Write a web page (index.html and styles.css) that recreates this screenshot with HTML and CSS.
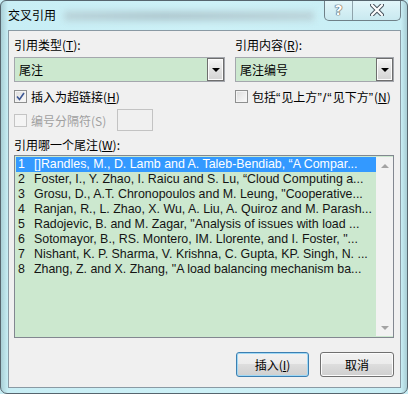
FILE: index.html
```html
<!DOCTYPE html>
<html lang="zh-CN">
<head>
  <meta charset="UTF-8">
  <title>交叉引用</title>
  <link rel="stylesheet" href="styles.css">
</head>
<body>
  <div class="window">
    <div class="titlebar">
      <span class="title">交叉引用</span>
      <span class="glass-blur"></span>
      <div class="caption-buttons">
        <span class="cap-btn help">?</span>
        <span class="cap-btn close">
          <svg width="14" height="12" viewBox="0 0 14 12">
            <path d="M2 1 L12 11 M12 1 L2 11" stroke="#4a5660" stroke-width="4.2" stroke-linecap="round"/>
            <path d="M2 1 L12 11 M12 1 L2 11" stroke="#ffffff" stroke-width="2.2" stroke-linecap="round"/>
          </svg>
        </span>
      </div>
    </div>

    <div class="client">
      <div class="top-row">
        <div class="col col-left">
          <div class="label">引用类型(<u>T</u>):</div>
          <div class="combo">
            <span class="combo-text">尾注</span>
            <span class="combo-btn"><i class="arrow-down"></i></span>
          </div>
          <div class="check-row">
            <span class="checkbox">
              <svg width="9" height="9" viewBox="0 0 9 9"><path d="M1 4.5 L3.5 7.5 L8 1" fill="none" stroke="#3b5694" stroke-width="1.6"/></svg>
            </span>
            <span>插入为超链接(<u>H</u>)</span>
          </div>
        </div>
        <div class="col col-right">
          <div class="label">引用内容(<u>R</u>):</div>
          <div class="combo">
            <span class="combo-text">尾注编号</span>
            <span class="combo-btn"><i class="arrow-down"></i></span>
          </div>
          <div class="check-row">
            <span class="checkbox"></span>
            <span>包括<span class="q">“</span>见上方<span class="q">”/“</span>见下方<span class="q">”</span>(<u>N</u>)</span>
          </div>
        </div>
      </div>

      <div class="sep-row">
        <span class="checkbox disabled"></span>
        <span class="sep-label">编号分隔符(S)</span>
        <span class="sep-input"></span>
      </div>

      <div class="label list-label">引用哪一个尾注(<u>W</u>):</div>
      <div class="listbox">
        <div class="items">
          <div class="item selected"><span class="num">1</span><span class="txt">[]Randles, M., D. Lamb and A. Taleb-Bendiab, “A Compar...</span></div>
          <div class="item"><span class="num">2</span><span class="txt">Foster, I., Y. Zhao, I. Raicu and S. Lu, “Cloud Computing a...</span></div>
          <div class="item"><span class="num">3</span><span class="txt">Grosu, D., A.T. Chronopoulos and M. Leung, "Cooperative...</span></div>
          <div class="item"><span class="num">4</span><span class="txt">Ranjan, R., L. Zhao, X. Wu, A. Liu, A. Quiroz and M. Parash...</span></div>
          <div class="item"><span class="num">5</span><span class="txt">Radojevic, B. and M. Zagar, "Analysis of issues with load ...</span></div>
          <div class="item"><span class="num">6</span><span class="txt">Sotomayor, B., RS. Montero, IM. Llorente, and I. Foster, "...</span></div>
          <div class="item"><span class="num">7</span><span class="txt">Nishant, K. P. Sharma, V. Krishna, C. Gupta, KP. Singh, N. ...</span></div>
          <div class="item"><span class="num">8</span><span class="txt">Zhang, Z. and X. Zhang, "A load balancing mechanism ba...</span></div>
        </div>
        <div class="scrollbar">
          <span class="sb-btn"><i class="arrow-up"></i></span>
          <span class="sb-btn"><i class="arrow-small-down"></i></span>
        </div>
      </div>

      <div class="buttons">
        <button class="btn default">插入(<u>I</u>)</button>
        <button class="btn">取消</button>
      </div>
    </div>
  </div>
</body>
</html>
```

FILE: styles.css
```css
body {
  margin: 0;
  font-family: "Noto Sans CJK SC", sans-serif;
  font-size: 12px;
  color: #000;
  background: #c9eef5;
}

.window {
  width: 408px;
  height: 394px;
  box-sizing: border-box;
  border: 1px solid #56656e;
  border-radius: 6px 6px 7px 7px;
  background: linear-gradient(90deg, #a9cfd6 0, #c8eef5 7px, #cdf1f7 50%, #c8eef5 400px, #9fc3ca 408px);
  overflow: hidden;
}

.titlebar {
  height: 29px;
  display: flex;
  align-items: flex-start;
  position: relative;
}

.title {
  margin: 6px 0 0 7px;
  line-height: 16px;
  color: #000;
}

.glass-blur {
  width: 250px;
  height: 10px;
  margin: 10px 0 0 8px;
  background: linear-gradient(90deg, #b6cdd3, #a9c0c7 40%, #b8ced4);
  filter: blur(3px);
  opacity: 0.8;
}

.caption-buttons {
  position: absolute;
  top: -1px;
  right: 6px;
  display: flex;
  height: 20px;
  border: 1px solid #6f8088;
  border-top: none;
  border-radius: 0 0 5px 5px;
  background: linear-gradient(#e3f6fa, #c9e9f0);
  overflow: hidden;
}

.cap-btn {
  display: flex;
  align-items: center;
  justify-content: center;
  height: 20px;
}

.help {
  width: 27px;
  border-right: 1px solid #8fa3ab;
  font-family: "DejaVu Sans", sans-serif;
  font-weight: bold;
  font-size: 14px;
  color: #fff;
  text-shadow: 0 0 1px #3f4a52, 0 0 1px #3f4a52, 0 0 1px #3f4a52;
}

.close {
  width: 47px;
}

.client {
  width: 393px;
  height: 358px;
  margin-left: 7px;
  box-sizing: border-box;
  border: 1px solid #8a9aa4;
  background: #f0f0f0;
  padding: 6px 6px 0 5px;
}

.top-row {
  display: flex;
  gap: 10px;
}

.col-left {
  width: 211px;
}

.col-right {
  width: 159px;
}

.label {
  height: 16px;
  line-height: 16px;
  white-space: nowrap;
}

.combo {
  margin-top: 4px;
  height: 25px;
  box-sizing: border-box;
  border: 1px solid #a4a7ad;
  background: #cce8cf;
  display: flex;
  align-items: center;
  justify-content: space-between;
}

.combo-text {
  padding-left: 4px;
}

.combo-btn {
  width: 17px;
  height: 23px;
  box-sizing: border-box;
  border: 1px solid #6e6e6e;
  background: linear-gradient(#f6f6f6, #e2e2e2 50%, #d4d4d4);
  box-shadow: inset 0 0 0 1px #fbfbfb;
  display: flex;
  align-items: center;
  justify-content: center;
}

.arrow-down {
  width: 0;
  height: 0;
  border-left: 4px solid transparent;
  border-right: 4px solid transparent;
  border-top: 4px solid #000;
}

.check-row {
  margin-top: 6px;
  height: 16px;
  display: flex;
  align-items: center;
  gap: 4px;
  white-space: nowrap;
}

.q {
  font-family: "Liberation Sans", sans-serif;
  font-size: 13px;
  letter-spacing: 1px;
}

.checkbox {
  width: 13px;
  height: 13px;
  box-sizing: border-box;
  border: 1px solid #8e8f8f;
  background: linear-gradient(135deg, #dcdcdc, #fbfbfb);
  box-shadow: inset 0 0 0 1px #f4f4f4;
  display: flex;
  align-items: center;
  justify-content: center;
  flex-shrink: 0;
}

.checkbox.disabled {
  border-color: #c4c4c4;
  background: #f4f4f4;
}

.sep-row {
  margin-top: 5px;
  height: 22px;
  display: flex;
  align-items: center;
}

.sep-label {
  margin-left: 4px;
  color: #a0a0a0;
  width: 86px;
}

.sep-input {
  width: 36px;
  height: 22px;
  box-sizing: border-box;
  border: 1px solid #c3c3c3;
  background: #f0f0f0;
}

.list-label {
  margin-top: 6px;
}

.listbox {
  margin-top: 2px;
  width: 380px;
  height: 183px;
  box-sizing: border-box;
  border: 1px solid #828790;
  background: #cce8cf;
  padding: 1px 0 1px 1px;
  display: flex;
}

.items {
  flex: 1;
  min-width: 0;
  font-family: "Liberation Sans", sans-serif;
  font-size: 12.4px;
  color: #141414;
}

.item {
  height: 15px;
  line-height: 15px;
  padding-left: 2px;
  display: flex;
  white-space: nowrap;
  overflow: hidden;
}

.item.selected {
  background: #3399ff;
  color: #fff;
}

.num {
  width: 16px;
  flex-shrink: 0;
}

.txt {
  overflow: hidden;
  text-overflow: ellipsis;
}

.scrollbar {
  width: 17px;
  background: #f2f2f2;
  display: flex;
  flex-direction: column;
  justify-content: space-between;
}

.sb-btn {
  height: 17px;
  display: flex;
  align-items: center;
  justify-content: center;
}

.arrow-up {
  width: 0;
  height: 0;
  border-left: 4px solid transparent;
  border-right: 4px solid transparent;
  border-bottom: 4px solid #a3a3a3;
}

.arrow-small-down {
  width: 0;
  height: 0;
  border-left: 4px solid transparent;
  border-right: 4px solid transparent;
  border-top: 4px solid #a3a3a3;
}

.buttons {
  margin-top: 14px;
  display: flex;
  justify-content: flex-end;
  gap: 11px;
}

.btn {
  width: 74px;
  height: 25px;
  padding: 0;
  font-family: "Noto Sans CJK SC", sans-serif;
  font-size: 12px;
  color: #000;
  border: 1px solid #707070;
  border-radius: 3px;
  background: linear-gradient(#f2f2f2, #ebebeb 50%, #dddddd 50%, #cfcfcf);
  box-shadow: inset 0 0 0 1px #fcfcfc;
}

.btn.default {
  width: 73px;
  border-color: #3c7fb1;
  box-shadow: inset 0 0 0 1px #9fd8f5;
}
```
